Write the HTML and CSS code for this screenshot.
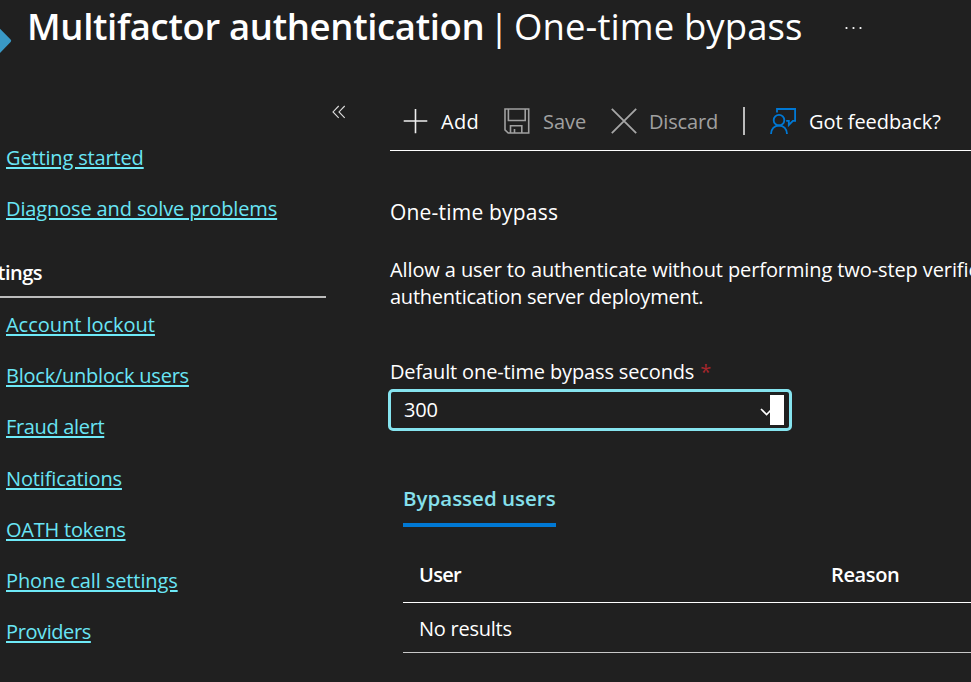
FILE: index.html
```html
<!DOCTYPE html>
<html lang="en">
<head>
<meta charset="utf-8">
<title>Multifactor authentication | One-time bypass</title>
<link rel="stylesheet" href="styles.css">
</head>
<body>
<header class="header">
  <svg class="logo" width="12" height="26" viewBox="0 0 12 26"><path d="M0 .8 10.6 11.5Q11.9 12.8 10.6 14.1L0 25Z" fill="#3999c6"/></svg>
  <h1 class="title"><strong>Multifactor authentication</strong><span class="bar">|</span><span class="section">One-time bypass</span></h1>
  <svg class="more" width="18" height="4" viewBox="0 0 18 4" fill="#fff"><circle cx="1.5" cy="2" r="1.1"/><circle cx="8.5" cy="2" r="1.1"/><circle cx="15.5" cy="2" r="1.1"/></svg>
</header>
<div class="layout">
  <nav class="sidebar">
    <div class="collapse"><svg width="14" height="14" viewBox="0 0 14 14" fill="none" stroke="#ddd" stroke-width="1.1"><path d="M6.7 1 1 6.9l5.7 5.9M12.7 1 7 6.9l5.7 5.9"/></svg></div>
    <a class="link getting">Getting started</a>
    <a class="link diagnose">Diagnose and solve problems</a>
    <h2 class="group"><span>Settings</span></h2>
    <a class="link account">Account lockout</a>
    <a class="link block">Block/unblock users</a>
    <a class="link fraud">Fraud alert</a>
    <a class="link notifications">Notifications</a>
    <a class="link oath">OATH tokens</a>
    <a class="link phone">Phone call settings</a>
    <a class="link providers">Providers</a>
  </nav>
  <main class="main">
    <div class="toolbar">
      <svg class="plus" width="25" height="26" viewBox="0 0 25 26" fill="none" stroke="#eee" stroke-width="1.6"><path d="M.7 13H24.3M12.5 1V25.3"/></svg>
      <span class="add">Add</span>
      <svg class="disk" width="26" height="26" viewBox="0 0 26 26" fill="none" stroke="#a0a0a0" stroke-width="1.6"><path d="M1 1H24.7V25H4.2L1 21.9ZM4.4 1V12.5H21.2V1M6.5 25V17.8H17.8V25M10.5 25V21"/></svg>
      <span class="save">Save</span>
      <svg class="cross" width="26" height="26" viewBox="0 0 26 26" fill="none" stroke="#a6a6a6" stroke-width="1.8"><path d="M.8.8 25.2 25.2M25.2.8.8 25.2"/></svg>
      <span class="discard">Discard</span>
      <i class="divider"></i>
      <svg class="person" width="27" height="27" viewBox="0 0 27 27" fill="none" stroke="#0078d4" stroke-width="1.8"><circle cx="9" cy="12.2" r="5.3"/><path d="M1 26C1 21 4.4 17.5 9 17.5S17 21 17 26M7 4.5V1H25.1V12.9H22.9L18.8 17V12.9H16.2"/></svg>
      <span class="feedback">Got feedback?</span>
    </div>
    <h2 class="heading">One-time bypass</h2>
    <p class="text"><span class="line1">Allow a user to authenticate without performing two-step verification</span><br><span class="line2">authentication server deployment.</span></p>
    <label class="label">Default one-time bypass seconds <b>*</b></label>
    <div class="select"><span>300</span><svg width="14" height="10" viewBox="0 0 14 10" fill="none" stroke="#fff" stroke-width="1.6"><path d="M1 2 6.6 7.6 12 2"/></svg><i class="block-cursor"></i></div>
    <section class="users">
      <div class="tab">Bypassed users</div>
      <div class="row head"><span class="user">User</span><span class="reason">Reason</span></div>
      <div class="row empty">No results</div>
    </section>
  </main>
</div>
</body>
</html>
```
FILE: styles.css
```css
* { box-sizing: border-box; }
body {
  margin: 0;
  width: 971px;
  height: 682px;
  overflow: hidden;
  background: #202020;
  color: #fff;
  font: 20px/27px "Open Sans", "Noto Sans", sans-serif;
}
svg { display: block; flex: none; }
h1, h2, p { margin: 0; font-weight: 400; }

.header { display: flex; height: 60px; white-space: nowrap; }
.logo { margin-top: 28px; }
.title { display: flex; width: 790px; margin-left: 15px; font-size: 36.5px; line-height: 52px; }
.title strong { width: 462px; font-weight: 600; letter-spacing: -.34px; }
.bar { width: 25px; }
.section { letter-spacing: .1px; }
.more { margin: 26px 0 0 28px; }

.layout { display: flex; }
.sidebar { flex: none; width: 390px; display: flex; flex-direction: column; align-items: flex-start; padding-left: 6px; }
.collapse { height: 84px; padding: 45px 0 0 326px; }
.link {
  height: 27px;
  margin-bottom: 24.2px;
  color: #69e5f5;
  text-decoration: underline 2px #6eeaf8;
  text-underline-offset: 2px;
  white-space: nowrap;
}
.getting { letter-spacing: -.15px; }
.diagnose { letter-spacing: -.13px; }
.account { letter-spacing: -.024px; }
.block { letter-spacing: -.23px; }
.fraud { letter-spacing: -.34px; }
.notifications { letter-spacing: -.14px; }
.oath { letter-spacing: -.21px; }
.phone { letter-spacing: -.11px; }
.providers { letter-spacing: -.4px; }
.group {
  display: flex;
  justify-content: flex-end;
  width: 326px;
  height: 39px;
  margin: 12.6px 0 13px -6px;
  padding-right: 284px;
  border-bottom: 2px solid #bcbcbc;
  font-size: 20px;
  font-weight: 600;
  letter-spacing: -.5px;
}

.main { flex: none; width: 581px; }
.toolbar { display: flex; align-items: center; height: 91px; padding: 32px 0 0 13px; border-bottom: 1px solid #fff; white-space: nowrap; }
.add { width: 63px; margin-left: 13px; letter-spacing: .3px; }
.save { width: 68px; margin-left: 13px; color: #a0a0a0; letter-spacing: 0; }
.discard { width: 94px; margin-left: 12px; color: #a0a0a0; letter-spacing: -.16px; }
.divider { width: 2px; height: 28px; background: #bbb; }
.person { margin-left: 25px; }
.feedback { margin-left: 12px; letter-spacing: -.05px; }
.heading { margin-top: 47px; font-size: 21px; line-height: 29px; letter-spacing: .2px; }
.text { margin-top: 29px; white-space: nowrap; }
.line1 { letter-spacing: -.103px; }
.line2 { letter-spacing: -.25px; }
.label { display: block; margin-top: 48px; letter-spacing: -.139px; }
.label b { margin-left: 1px; color: #a4262c; font-weight: 400; }
.select {
  position: relative;
  display: flex;
  align-items: center;
  width: 404px;
  height: 42px;
  margin: 4px 0 0 -2px;
  padding: 0 0 0 13px;
  border: 3px solid #86e4ef;
  border-radius: 5px;
  letter-spacing: -.17px;
}
.select span { flex: none; width: 356px; padding-bottom: 2px; }
.select svg { margin-top: 3px; }
.block-cursor { position: absolute; right: 5px; top: 3px; width: 14px; height: 30px; background: #fff; }
.users { padding-left: 13px; }
.tab { width: 153px; height: 43px; margin-top: 53px; border-bottom: 4px solid #0078d4; color: #86e0ec; font-size: 20.5px; line-height: 28px; font-weight: 600; white-space: nowrap; }
.row { display: flex; padding-left: 16px; border-bottom: 1px solid #fff; }
.head { height: 76px; padding-top: 34px; font-weight: 600; }
.user { width: 412px; letter-spacing: -.7px; }
.reason { letter-spacing: -.36px; }
.empty { height: 50px; padding-top: 12px; border-color: #c8c8c8; letter-spacing: -.25px; }
```
